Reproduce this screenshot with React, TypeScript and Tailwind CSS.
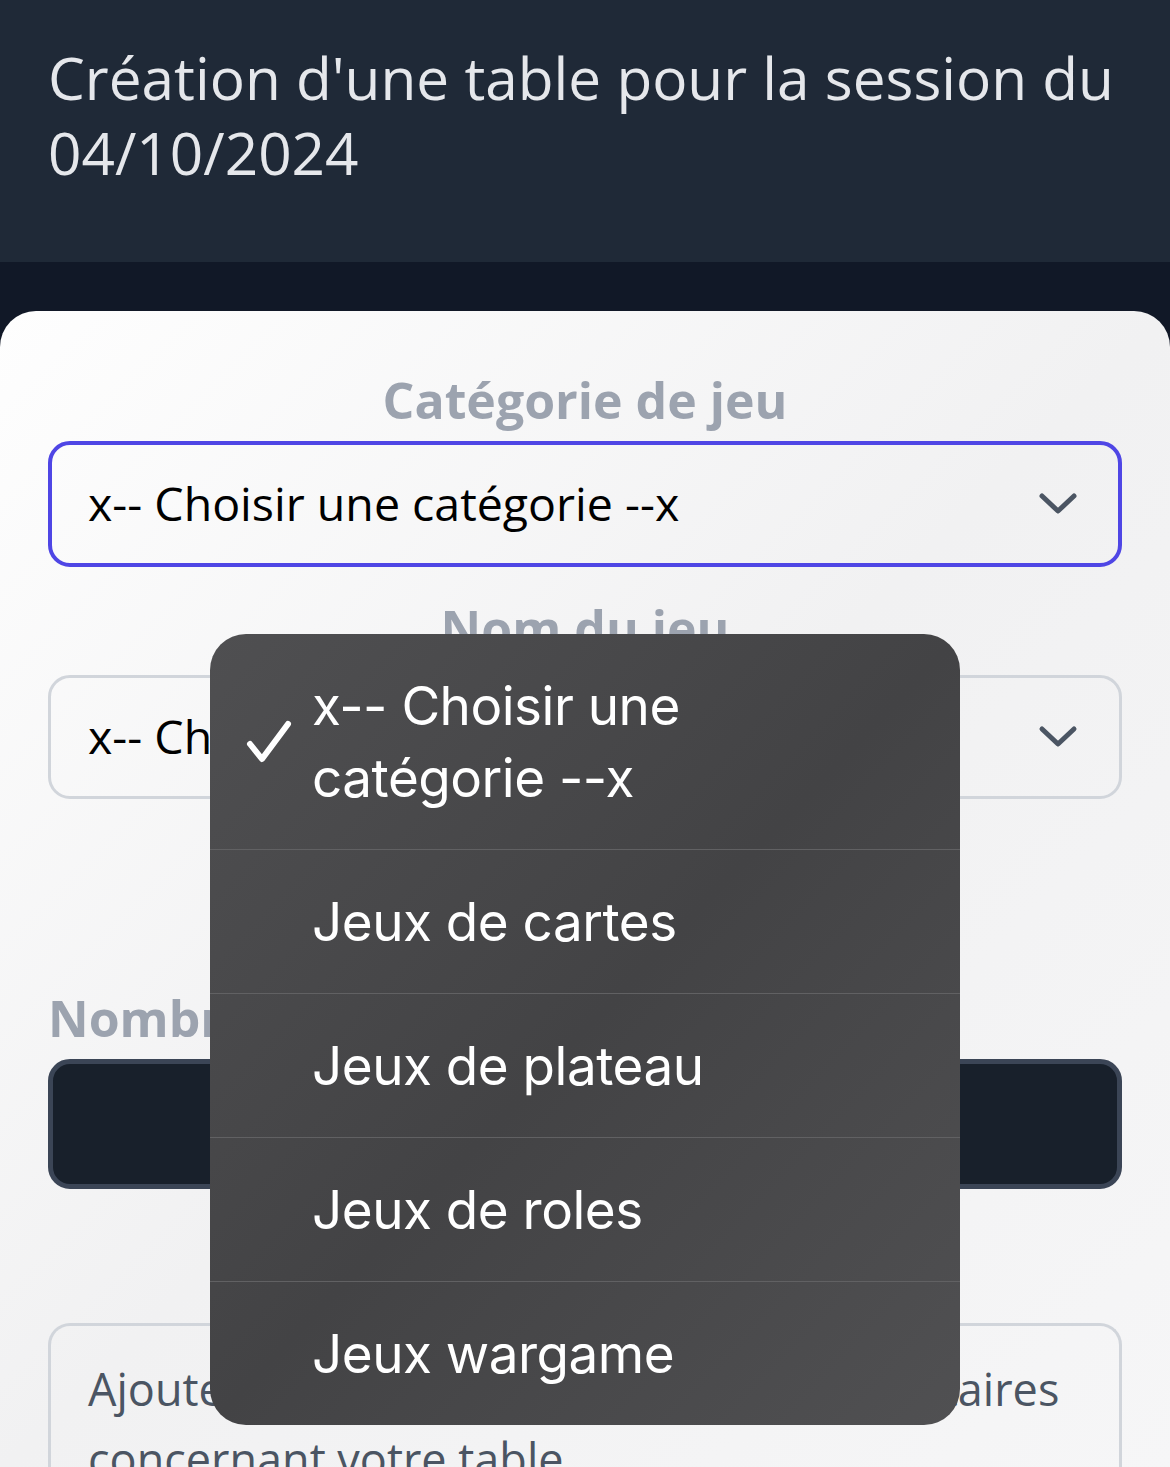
import React from "react";

const categories = [
  "x-- Choisir une catégorie --x",
  "Jeux de cartes",
  "Jeux de plateau",
  "Jeux de roles",
  "Jeux wargame",
];

function Chevron() {
  return (
    <svg width="40" height="26" viewBox="0 0 40 26" fill="none">
      <path d="M4 5l16 15L36 5" stroke="#4b5563" strokeWidth="5" strokeLinecap="round" strokeLinejoin="round" />
    </svg>
  );
}

function Check() {
  return (
    <svg width="46" height="44" viewBox="0 0 46 44" fill="none">
      <path d="M4 24l12 15L42 4" stroke="white" strokeWidth="6" strokeLinecap="round" strokeLinejoin="round" />
    </svg>
  );
}

const App: React.FC = () => {
  return (
    <div className="relative w-full h-[1467px] overflow-hidden bg-[#111827] font-['Open_Sans','Noto_Sans',sans-serif]">
      {/* En-tête */}
      <header className="h-[262px] bg-[#1f2937] px-12 pt-[40px]">
        <h1 className="text-[58.5px] leading-[75px] text-[#e5e7eb]">
          Création d'une table pour la session du 04/10/2024
        </h1>
      </header>
      <div className="h-[49px]" />

      {/* Formulaire */}
      <main className="rounded-t-[36px] bg-gradient-to-br from-[#fefefe] via-[#f1f1f2] to-[#f6f6f7] px-12 pt-[58px] h-[1160px]">
        <label className="block text-center text-[50px] leading-[62px] font-bold text-[#9ca3af]">
          Catégorie de jeu
        </label>
        <div className="mt-[10px] h-[126px] rounded-[22px] border-[4px] border-[#4f46e5] flex items-center justify-between pl-[36px] pr-[40px]">
          <span className="text-[46.5px] text-black">x-- Choisir une catégorie --x</span>
          <Chevron />
        </div>

        <label className="block mt-[30px] text-center text-[50px] leading-[62px] font-bold text-[#9ca3af]">
          Nom du jeu
        </label>
        <div className="mt-[16px] h-[124px] rounded-[22px] border-[3px] border-[#d1d5db] flex items-center justify-between pl-[37px] pr-[41px]">
          <span className="text-[46.5px] text-black">x-- Choisir un jeu --x</span>
          <Chevron />
        </div>

        <label className="block mt-[188px] text-[50px] leading-[62px] font-bold text-[#9ca3af]">
          Nombre de joueurs au début
        </label>
        <div className="mt-[10px] h-[130px] rounded-[22px] border-[5px] border-[#3b4556] bg-[#18202b]" />

        <div className="mt-[134px] h-[200px] rounded-t-[22px] border-[3px] border-b-0 border-[#d1d5db] pl-[37px] pr-[30px] pt-[28px]">
          <p className="text-[45px] leading-[70px] text-[#4b5563]">
            Ajoutez des renseignements complémentaires concernant votre table
          </p>
        </div>
      </main>

      {/* Menu natif de sélection */}
      <div className="absolute left-[210px] top-[634px] w-[750px] rounded-[36px] overflow-hidden bg-gradient-to-br from-[#4f4f51] via-[#434345] to-[#505052] font-['Inter','Roboto',sans-serif] text-white">
        {categories.map((c, i) => (
          <div
            key={c}
            className={`relative flex items-center pl-[102px] pr-[60px] text-[53px] leading-[72px] tracking-[-0.5px] ${
              i === 0 ? "h-[215px]" : "h-[144px] border-t border-[#616163]"
            }`}
          >
            {i === 0 && (
              <span className="absolute left-[36px] top-[86px]">
                <Check />
              </span>
            )}
            <span className="max-w-[440px]">{c}</span>
          </div>
        ))}
      </div>
    </div>
  );
};

export default App;
